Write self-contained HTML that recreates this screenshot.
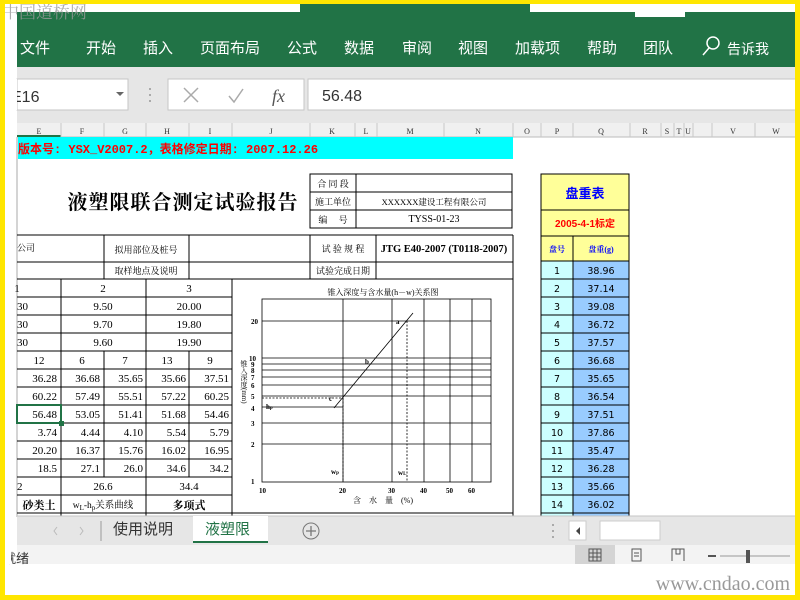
<!DOCTYPE html>
<html><head><meta charset="utf-8"><style>
html,body{margin:0;padding:0;width:800px;height:600px;overflow:hidden;background:#fff}
svg{position:absolute;left:0;top:0}
</style></head><body>
<svg width="800" height="600" viewBox="0 0 800 600" xmlns="http://www.w3.org/2000/svg" font-family="Liberation Serif, Noto Serif CJK SC, serif">
<rect x="0" y="0" width="800" height="600" fill="#fff"/>
<rect x="17" y="12" width="778" height="55" fill="#217346"/>
<rect x="17" y="0" width="778" height="12" fill="#fff"/>
<rect x="300" y="4" width="230" height="10" fill="#217346"/>
<rect x="635" y="4" width="50" height="13" fill="#fff"/>
<g font-family="Liberation Sans, Noto Sans CJK SC, sans-serif" font-size="15" fill="#fff">
<text x="20" y="53">文件</text><text x="86" y="53">开始</text><text x="143" y="53">插入</text>
<text x="200" y="53">页面布局</text><text x="287" y="53">公式</text><text x="344" y="53">数据</text>
<text x="402" y="53">审阅</text><text x="458" y="53">视图</text><text x="515" y="53">加载项</text>
<text x="587" y="53">帮助</text><text x="643" y="53">团队</text><text x="727" y="54" font-size="14">告诉我</text>
</g>
<circle cx="713" cy="43" r="6" fill="none" stroke="#fff" stroke-width="1.5"/>
<line x1="709" y1="48" x2="703" y2="55" stroke="#fff" stroke-width="1.5"/>
<text x="2" y="18" font-family="Noto Serif CJK SC, serif" font-size="17" fill="#9a9a9a" opacity="0.8">中国道桥网</text>
<rect x="17" y="67" width="778" height="56" fill="#e6e6e6"/>
<rect x="17" y="79" width="111" height="31" fill="#fff" stroke="#c6c6c6"/>
<text x="11" y="102" font-family="Liberation Sans, sans-serif" font-size="16" fill="#333">E16</text>
<rect x="5" y="79" width="12" height="31" fill="#fff"/>
<path d="M116 92 l4 4 l4 -4z" fill="#666"/>
<g fill="#aaa"><rect x="149" y="88" width="2" height="2"/><rect x="149" y="94" width="2" height="2"/><rect x="149" y="100" width="2" height="2"/></g>
<rect x="168" y="79" width="136" height="31" fill="#fff" stroke="#c6c6c6"/>
<path d="M184 88 l14 14 M198 88 l-14 14" stroke="#aaa" stroke-width="1.5"/>
<path d="M229 96 l5 6 l9 -13" stroke="#aaa" stroke-width="1.5" fill="none"/>
<text x="272" y="102" font-family="Liberation Serif, serif" font-style="italic" font-size="18" fill="#555">fx</text>
<rect x="308" y="79" width="492" height="31" fill="#fff" stroke="#c6c6c6"/>
<text x="322" y="101" font-family="Liberation Sans, sans-serif" font-size="16" fill="#333">56.48</text>
<rect x="17" y="123" width="778" height="14" fill="#f0f0f0"/>
<line x1="17" y1="137" x2="795" y2="137" stroke="#bbb"/>
<rect x="17" y="135" width="44" height="2" fill="#217346"/>
<g stroke="#c8c8c8"><line x1="61" y1="123" x2="61" y2="137"/><line x1="104" y1="123" x2="104" y2="137"/><line x1="146" y1="123" x2="146" y2="137"/><line x1="189" y1="123" x2="189" y2="137"/><line x1="232" y1="123" x2="232" y2="137"/><line x1="310" y1="123" x2="310" y2="137"/><line x1="355" y1="123" x2="355" y2="137"/><line x1="377" y1="123" x2="377" y2="137"/><line x1="444" y1="123" x2="444" y2="137"/><line x1="513" y1="123" x2="513" y2="137"/><line x1="541" y1="123" x2="541" y2="137"/><line x1="573" y1="123" x2="573" y2="137"/><line x1="630" y1="123" x2="630" y2="137"/><line x1="661" y1="123" x2="661" y2="137"/><line x1="674" y1="123" x2="674" y2="137"/><line x1="684" y1="123" x2="684" y2="137"/><line x1="693" y1="123" x2="693" y2="137"/><line x1="712" y1="123" x2="712" y2="137"/><line x1="755" y1="123" x2="755" y2="137"/></g>
<g font-size="8" fill="#333" text-anchor="middle"><text x="39" y="134">E</text><text x="82" y="134">F</text><text x="125" y="134">G</text><text x="167" y="134">H</text><text x="210" y="134">I</text><text x="271" y="134">J</text><text x="332" y="134">K</text><text x="366" y="134">L</text><text x="410" y="134">M</text><text x="478" y="134">N</text><text x="527" y="134">O</text><text x="557" y="134">P</text><text x="601" y="134">Q</text><text x="645" y="134">R</text><text x="667" y="134">S</text><text x="679" y="134">T</text><text x="688" y="134">U</text><text x="733" y="134">V</text><text x="776" y="134">W</text></g>
<line x1="17" y1="137" x2="17" y2="517" stroke="#aaa"/>
<rect x="18" y="137" width="495" height="22" fill="#00ffff"/>
<text x="18" y="153" font-family="Liberation Mono, Noto Sans CJK SC, monospace" font-weight="bold" font-size="12" fill="#ff0000">版本号: YSX_V2007.2，表格修定日期: 2007.12.26</text>
<text x="183" y="209" text-anchor="middle" font-size="20" font-weight="bold" fill="#000" letter-spacing="1">液塑限联合测定试验报告</text>
<g stroke="#000" fill="none" stroke-width="1">
<rect x="310" y="174" width="202" height="54"/><line x1="310" y1="192" x2="512" y2="192"/><line x1="310" y1="210" x2="512" y2="210"/><line x1="356" y1="174" x2="356" y2="228"/>
<line x1="17" y1="235" x2="513" y2="235"/><line x1="17" y1="262" x2="513" y2="262"/><line x1="17" y1="279" x2="513" y2="279"/>
<line x1="104" y1="235" x2="104" y2="279"/><line x1="189" y1="235" x2="189" y2="279"/><line x1="310" y1="235" x2="310" y2="279"/><line x1="376" y1="235" x2="376" y2="279"/><line x1="513" y1="235" x2="513" y2="517"/>
</g>
<g font-size="9" fill="#000" text-anchor="middle">
<text x="333" y="187">合 同 段</text><text x="333" y="205">施工单位</text><text x="333" y="223">编　 号</text>
<text x="434" y="205" font-size="8.5">XXXXXX建设工程有限公司</text><text x="434" y="222" font-size="10">TYSS-01-23</text>
<text x="146" y="253">拟用部位及桩号</text><text x="146" y="274">取样地点及说明</text>
<text x="343" y="252">试 验 规 程</text><text x="343" y="274">试验完成日期</text>
<text x="444" y="252" font-weight="bold" font-size="10.5">JTG E40-2007 (T0118-2007)</text>
<text x="17" y="251" text-anchor="start">公司</text>
</g>
<g stroke="#000" stroke-width="1">
<line x1="17" y1="297" x2="232" y2="297"/><line x1="17" y1="315" x2="232" y2="315"/><line x1="17" y1="333" x2="232" y2="333"/><line x1="17" y1="351" x2="232" y2="351"/><line x1="17" y1="369" x2="232" y2="369"/><line x1="17" y1="387" x2="232" y2="387"/><line x1="17" y1="405" x2="232" y2="405"/><line x1="17" y1="423" x2="232" y2="423"/><line x1="17" y1="441" x2="232" y2="441"/><line x1="17" y1="459" x2="232" y2="459"/><line x1="17" y1="477" x2="232" y2="477"/><line x1="17" y1="495" x2="232" y2="495"/><line x1="17" y1="513" x2="513" y2="513"/>
<line x1="61" y1="279" x2="61" y2="517"/><line x1="146" y1="279" x2="146" y2="517"/><line x1="232" y1="279" x2="232" y2="517"/>
<line x1="104" y1="351" x2="104" y2="477"/><line x1="189" y1="351" x2="189" y2="477"/>
</g>
<rect x="17" y="405" width="44" height="18" fill="none" stroke="#217346" stroke-width="2"/>
<rect x="59" y="421" width="5" height="5" fill="#217346"/>
<g font-size="11" fill="#000" text-anchor="middle">
<text x="17" y="292">1</text><text x="103" y="292">2</text><text x="189" y="292">3</text>
<text x="17" y="310" text-anchor="start">30</text><text x="103" y="310">9.50</text><text x="189" y="310">20.00</text>
<text x="17" y="328" text-anchor="start">30</text><text x="103" y="328">9.70</text><text x="189" y="328">19.80</text>
<text x="17" y="346" text-anchor="start">30</text><text x="103" y="346">9.60</text><text x="189" y="346">19.90</text>
<text x="39" y="364">12</text><text x="82" y="364">6</text><text x="125" y="364">7</text><text x="167" y="364">13</text><text x="210" y="364">9</text>
</g>
<g font-size="11" fill="#000" text-anchor="end">
<text x="57" y="382">36.28</text><text x="100" y="382">36.68</text><text x="143" y="382">35.65</text><text x="186" y="382">35.66</text><text x="229" y="382">37.51</text>
<text x="57" y="400">60.22</text><text x="100" y="400">57.49</text><text x="143" y="400">55.51</text><text x="186" y="400">57.22</text><text x="229" y="400">60.25</text>
<text x="57" y="418">56.48</text><text x="100" y="418">53.05</text><text x="143" y="418">51.41</text><text x="186" y="418">51.68</text><text x="229" y="418">54.46</text>
<text x="57" y="436">3.74</text><text x="100" y="436">4.44</text><text x="143" y="436">4.10</text><text x="186" y="436">5.54</text><text x="229" y="436">5.79</text>
<text x="57" y="454">20.20</text><text x="100" y="454">16.37</text><text x="143" y="454">15.76</text><text x="186" y="454">16.02</text><text x="229" y="454">16.95</text>
<text x="57" y="472">18.5</text><text x="100" y="472">27.1</text><text x="143" y="472">26.0</text><text x="186" y="472">34.6</text><text x="229" y="472">34.2</text>
</g>
<g font-size="11" fill="#000" text-anchor="middle">
<text x="17" y="490" text-anchor="start">2</text><text x="103" y="490">26.6</text><text x="189" y="490">34.4</text>
<text x="39" y="509" font-weight="bold">砂类土</text><text x="103" y="508" font-size="9.5">w<tspan font-size="7" dy="2">L</tspan><tspan dy="-2">-h</tspan><tspan font-size="7" dy="2">p</tspan><tspan dy="-2">关系曲线</tspan></text><text x="189" y="509" font-weight="bold">多项式</text>
</g>
<text x="383" y="295" text-anchor="middle" font-size="8" fill="#000">锥入深度与含水量(h－w)关系图</text>
<g stroke="#000" stroke-width="0.8" fill="none">
<rect x="262" y="299" width="229" height="183"/>
<line x1="343" y1="299" x2="343" y2="482"/><line x1="392" y1="299" x2="392" y2="482"/><line x1="424" y1="299" x2="424" y2="482"/><line x1="450" y1="299" x2="450" y2="482"/><line x1="472" y1="299" x2="472" y2="482"/>
<line x1="262" y1="321" x2="491" y2="321"/><line x1="262" y1="358" x2="491" y2="358"/><line x1="262" y1="364" x2="491" y2="364"/><line x1="262" y1="370" x2="491" y2="370"/><line x1="262" y1="377" x2="491" y2="377"/><line x1="262" y1="385" x2="491" y2="385"/><line x1="262" y1="396" x2="491" y2="396"/><line x1="262" y1="423" x2="491" y2="423"/><line x1="262" y1="444" x2="491" y2="444"/>
<line x1="262" y1="407" x2="343" y2="407"/>
<line x1="334" y1="408" x2="413" y2="313"/>
<g stroke-dasharray="2,1.5"><line x1="262" y1="398" x2="343" y2="398"/><line x1="343" y1="398" x2="343" y2="482"/><line x1="407" y1="321" x2="407" y2="482"/></g>
</g>
<g font-size="7" fill="#000" font-weight="bold">
<text x="251" y="324">20</text><text x="249" y="361">10</text><text x="251" y="367">9</text><text x="251" y="373">8</text><text x="251" y="380">7</text><text x="251" y="388">6</text><text x="251" y="399">5</text><text x="251" y="411">4</text><text x="251" y="426">3</text><text x="251" y="447">2</text><text x="251" y="484">1</text>
<text x="259" y="493">10</text><text x="339" y="493">20</text><text x="388" y="493">30</text><text x="420" y="493">40</text><text x="446" y="493">50</text><text x="468" y="493">60</text>
<text x="396" y="324">a</text><text x="365" y="364">b</text><text x="329" y="401">c</text><text x="266" y="409">h<tspan font-size="5">p</tspan></text><text x="331" y="474">w<tspan font-size="5">p</tspan></text><text x="398" y="475">w<tspan font-size="5">L</tspan></text>
</g>
<text x="383" y="503" text-anchor="middle" font-size="8" fill="#000">含　水　量　(%)</text>
<text x="244" y="360" font-size="7" fill="#000" writing-mode="tb">锥入深度(mm)</text>
<rect x="541" y="174" width="88" height="87" fill="#ffff99" stroke="#000"/>
<line x1="541" y1="210" x2="629" y2="210" stroke="#000"/><line x1="541" y1="236" x2="629" y2="236" stroke="#000"/><line x1="573" y1="236" x2="573" y2="517" stroke="#000"/>
<text x="585" y="198" text-anchor="middle" font-family="Liberation Sans, Noto Sans CJK SC, sans-serif" font-weight="bold" font-size="13" fill="#0000ff">盘重表</text>
<text x="585" y="227" text-anchor="middle" font-family="Liberation Sans, Noto Sans CJK SC, sans-serif" font-weight="bold" font-size="10" fill="#ff0000">2005-4-1标定</text>
<text x="557" y="252" text-anchor="middle" font-size="8" font-weight="bold" fill="#0000ff">盘号</text>
<text x="601" y="252" text-anchor="middle" font-size="8" font-weight="bold" fill="#0000ff">盘重(g)</text>
<rect x="541" y="261" width="32" height="256" fill="#ccffff"/><rect x="573" y="261" width="56" height="256" fill="#99ccff"/>
<g stroke="#000"><line x1="541" y1="261" x2="541" y2="517"/><line x1="573" y1="261" x2="573" y2="517"/><line x1="629" y1="261" x2="629" y2="517"/>
<line x1="541" y1="261" x2="629" y2="261"/><line x1="541" y1="279" x2="629" y2="279"/><line x1="541" y1="297" x2="629" y2="297"/><line x1="541" y1="315" x2="629" y2="315"/><line x1="541" y1="333" x2="629" y2="333"/><line x1="541" y1="351" x2="629" y2="351"/><line x1="541" y1="369" x2="629" y2="369"/><line x1="541" y1="387" x2="629" y2="387"/><line x1="541" y1="405" x2="629" y2="405"/><line x1="541" y1="423" x2="629" y2="423"/><line x1="541" y1="441" x2="629" y2="441"/><line x1="541" y1="459" x2="629" y2="459"/><line x1="541" y1="477" x2="629" y2="477"/><line x1="541" y1="495" x2="629" y2="495"/><line x1="541" y1="513" x2="629" y2="513"/></g>
<g font-family="DejaVu Sans, sans-serif" font-size="9.5" fill="#000" text-anchor="middle">
<text x="557" y="274">1</text><text x="601" y="274">38.96</text>
<text x="557" y="292">2</text><text x="601" y="292">37.14</text>
<text x="557" y="310">3</text><text x="601" y="310">39.08</text>
<text x="557" y="328">4</text><text x="601" y="328">36.72</text>
<text x="557" y="346">5</text><text x="601" y="346">37.57</text>
<text x="557" y="364">6</text><text x="601" y="364">36.68</text>
<text x="557" y="382">7</text><text x="601" y="382">35.65</text>
<text x="557" y="400">8</text><text x="601" y="400">36.54</text>
<text x="557" y="418">9</text><text x="601" y="418">37.51</text>
<text x="557" y="436">10</text><text x="601" y="436">37.86</text>
<text x="557" y="454">11</text><text x="601" y="454">35.47</text>
<text x="557" y="472">12</text><text x="601" y="472">36.28</text>
<text x="557" y="490">13</text><text x="601" y="490">35.66</text>
<text x="557" y="508">14</text><text x="601" y="508">36.02</text>
</g>
<rect x="17" y="516" width="778" height="29" fill="#e6e6e6"/>
<line x1="17" y1="516" x2="795" y2="516" stroke="#c6c6c6"/>
<path d="M57 527 l-3 4 l3 4 M80 527 l3 4 l-3 4" stroke="#bbb" fill="none"/>
<line x1="101" y1="521" x2="101" y2="541" stroke="#999"/>
<text x="113" y="534" font-family="Liberation Sans, Noto Sans CJK SC, sans-serif" font-size="15" fill="#333">使用说明</text>
<rect x="193" y="516" width="75" height="27" fill="#fff"/>
<rect x="193" y="541" width="75" height="2" fill="#217346"/>
<text x="205" y="534" font-family="Liberation Sans, Noto Sans CJK SC, sans-serif" font-size="15" fill="#217346">液塑限</text>
<circle cx="311" cy="531" r="8" fill="none" stroke="#777"/>
<path d="M311 526 v10 M306 531 h10" stroke="#777" stroke-width="1.3"/>
<g fill="#aaa"><rect x="552" y="524" width="2" height="2"/><rect x="552" y="530" width="2" height="2"/><rect x="552" y="536" width="2" height="2"/></g>
<rect x="569" y="521" width="17" height="19" fill="#fff" stroke="#ccc"/><path d="M580 527 l-4 4 l4 4z" fill="#444"/>
<rect x="600" y="521" width="60" height="19" fill="#fff" stroke="#ccc"/>
<rect x="17" y="545" width="778" height="19" fill="#f3f3f3"/>
<text x="3" y="563" font-family="Liberation Sans, Noto Sans CJK SC, sans-serif" font-size="13" fill="#333">就绪</text>
<rect x="5" y="545" width="6" height="19" fill="#fff"/>
<rect x="575" y="545" width="40" height="19" fill="#d4d4d4"/>
<g stroke="#555" fill="none"><rect x="589" y="549" width="12" height="12"/><path d="M593 549v12M597 549v12M589 553h12M589 557h12"/><rect x="632" y="549" width="9" height="12"/><path d="M634 553h5M634 556h5"/><path d="M672 561v-12h12v12M676 549v5h4v-5"/></g>
<line x1="708" y1="556" x2="716" y2="556" stroke="#555" stroke-width="2"/><line x1="720" y1="556" x2="790" y2="556" stroke="#999"/><rect x="746" y="550" width="4" height="13" fill="#555"/>
<text x="790" y="590" text-anchor="end" font-family="Liberation Serif, serif" font-size="20" fill="#999">www.cndao.com</text>
<rect x="0" y="0" width="800" height="4" fill="#ffe600"/>
<rect x="0" y="0" width="5" height="600" fill="#ffe600"/>
<rect x="795" y="0" width="5" height="600" fill="#ffe600"/>
<rect x="0" y="595" width="800" height="5" fill="#ffe600"/>
</svg>
</body></html>
